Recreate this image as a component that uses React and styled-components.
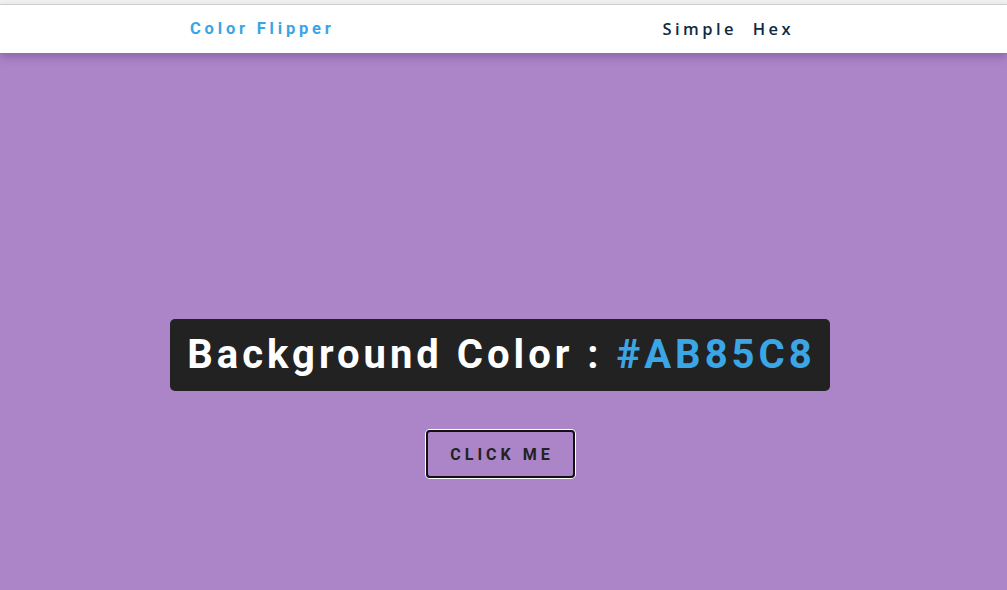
import React from "react";
import styled, { createGlobalStyle } from "styled-components";

const Global = createGlobalStyle`
  * { box-sizing: border-box; margin: 0; padding: 0; }
  html, body { width: 100%; height: 100%; }
  body {
    background: #ab85c8;
    font-family: Roboto, "Liberation Sans", sans-serif;
    overflow: hidden;
  }
`;

const Page = styled.div`
  display: flex;
  flex-direction: column;
  min-height: 590px;
`;

const BrowserStrip = styled.div`
  height: 5px;
  background: #f1f0ee;
  border-bottom: 1px solid #d3d3d3;
`;

const Nav = styled.nav`
  position: relative;
  z-index: 1;
  height: 48px;
  background: #ffffff;
  display: flex;
  align-items: center;
  box-shadow: 0 4px 8px rgba(60, 30, 80, 0.28);
`;

const NavCenter = styled.div`
  width: 620px;
  margin-left: 190px;
  display: flex;
  justify-content: space-between;
  align-items: center;
`;

const Brand = styled.h4`
  font-family: Roboto, sans-serif;
  font-weight: 700;
  font-size: 16.5px;
  letter-spacing: 3.8px;
  color: #39a5e6;
  line-height: 1;
  margin-top: 1px;
`;

const Links = styled.ul`
  list-style: none;
  display: flex;
`;

const LinkItem = styled.li`
  font-family: "Open Sans", sans-serif;
  font-weight: 600;
  font-size: 16.5px;
  letter-spacing: 3.4px;
  color: #102a43;
  margin-right: 16px;
  line-height: 1;
  margin-top: 1px;
`;

const Main = styled.main`
  flex: 1;
  display: flex;
  flex-direction: column;
  align-items: center;
  padding-top: 266px;
  padding-right: 7px;
`;

const Heading = styled.h2`
  background: #222222;
  color: #ffffff;
  font-family: Roboto, sans-serif;
  font-weight: 700;
  font-size: 40px;
  line-height: 40px;
  letter-spacing: 4px;
  padding: 16px 14px 16px 17px;
  border-radius: 5px;
  margin-bottom: 39px;
  white-space: nowrap;
`;

const Hex = styled.span`
  color: #3ba6e6;
`;

const Button = styled.button`
  font-family: Roboto, sans-serif;
  text-transform: uppercase;
  background: transparent;
  color: #222222;
  letter-spacing: 4px;
  font-weight: 700;
  font-size: 16px;
  line-height: 19px;
  width: 149px;
  height: 48px;
  padding: 0 0 0 4px;
  border: 2px solid #111111;
  border-radius: 4px;
  box-shadow: 0 0 0 1px #ffffff;
  cursor: pointer;
`;

export default function App() {
  return (
    <>
      <Global />
      <Page>
        <BrowserStrip />
        <Nav>
          <NavCenter>
            <Brand>Color Flipper</Brand>
            <Links>
              <LinkItem>Simple</LinkItem>
              <LinkItem>Hex</LinkItem>
            </Links>
          </NavCenter>
        </Nav>
        <Main>
          <Heading>
            Background Color : <Hex>#AB85C8</Hex>
          </Heading>
          <Button>click me</Button>
        </Main>
      </Page>
    </>
  );
}
